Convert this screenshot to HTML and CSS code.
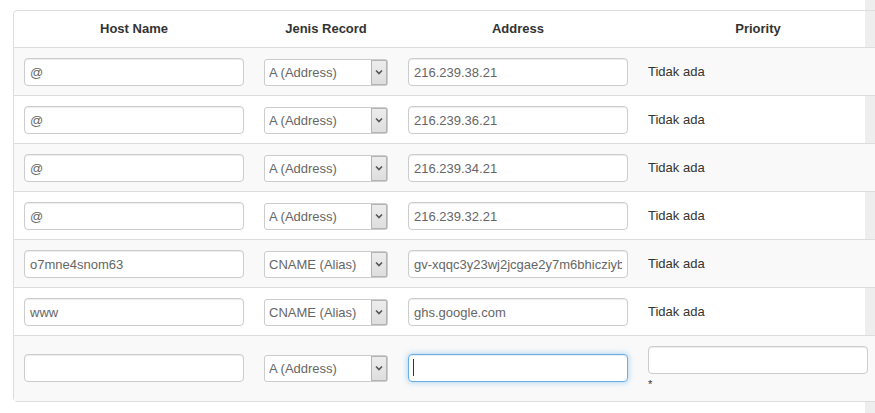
FILE: index.html
```html
<!DOCTYPE html>
<html lang="id">
<head>
    <meta charset="UTF-8">
    <meta name="viewport" content="width=device-width, initial-scale=1.0">
    <title>Data DNS</title>
    <link rel="stylesheet" href="styles.css">
</head>
<body>
    <div class="page">
        <div class="panel">
            <table class="dns-table">
                <colgroup>
                    <col class="col-host">
                    <col class="col-type">
                    <col class="col-addr">
                    <col class="col-prio">
                </colgroup>
                <thead>
                    <tr>
                        <th>Host Name</th>
                        <th>Jenis Record</th>
                        <th>Address</th>
                        <th>Priority</th>
                    </tr>
                </thead>
                <tbody>
                    <tr>
                        <td><input class="field" type="text" value="@"></td>
                        <td><div class="select-wrap"><select class="field-select"><option>A (Address)</option></select><span class="select-btn"><svg width="8" height="6" viewBox="0 0 8 6"><path d="M1 1.5 L4 4.5 L7 1.5" fill="none" stroke="#555" stroke-width="1.6"/></svg></span></div></td>
                        <td><input class="field" type="text" value="216.239.38.21"></td>
                        <td class="prio">Tidak ada</td>
                    </tr>
                    <tr>
                        <td><input class="field" type="text" value="@"></td>
                        <td><div class="select-wrap"><select class="field-select"><option>A (Address)</option></select><span class="select-btn"><svg width="8" height="6" viewBox="0 0 8 6"><path d="M1 1.5 L4 4.5 L7 1.5" fill="none" stroke="#555" stroke-width="1.6"/></svg></span></div></td>
                        <td><input class="field" type="text" value="216.239.36.21"></td>
                        <td class="prio">Tidak ada</td>
                    </tr>
                    <tr>
                        <td><input class="field" type="text" value="@"></td>
                        <td><div class="select-wrap"><select class="field-select"><option>A (Address)</option></select><span class="select-btn"><svg width="8" height="6" viewBox="0 0 8 6"><path d="M1 1.5 L4 4.5 L7 1.5" fill="none" stroke="#555" stroke-width="1.6"/></svg></span></div></td>
                        <td><input class="field" type="text" value="216.239.34.21"></td>
                        <td class="prio">Tidak ada</td>
                    </tr>
                    <tr>
                        <td><input class="field" type="text" value="@"></td>
                        <td><div class="select-wrap"><select class="field-select"><option>A (Address)</option></select><span class="select-btn"><svg width="8" height="6" viewBox="0 0 8 6"><path d="M1 1.5 L4 4.5 L7 1.5" fill="none" stroke="#555" stroke-width="1.6"/></svg></span></div></td>
                        <td><input class="field" type="text" value="216.239.32.21"></td>
                        <td class="prio">Tidak ada</td>
                    </tr>
                    <tr>
                        <td><input class="field" type="text" value="o7mne4snom63"></td>
                        <td><div class="select-wrap"><select class="field-select"><option>CNAME (Alias)</option></select><span class="select-btn"><svg width="8" height="6" viewBox="0 0 8 6"><path d="M1 1.5 L4 4.5 L7 1.5" fill="none" stroke="#555" stroke-width="1.6"/></svg></span></div></td>
                        <td><input class="field" type="text" value="gv-xqqc3y23wj2jcgae2y7m6bhicziybj3q.domainverify.googlehosted.com"></td>
                        <td class="prio">Tidak ada</td>
                    </tr>
                    <tr>
                        <td><input class="field" type="text" value="www"></td>
                        <td><div class="select-wrap"><select class="field-select"><option>CNAME (Alias)</option></select><span class="select-btn"><svg width="8" height="6" viewBox="0 0 8 6"><path d="M1 1.5 L4 4.5 L7 1.5" fill="none" stroke="#555" stroke-width="1.6"/></svg></span></div></td>
                        <td><input class="field" type="text" value="ghs.google.com"></td>
                        <td class="prio">Tidak ada</td>
                    </tr>
                    <tr class="new-row">
                        <td><input class="field" type="text" value=""></td>
                        <td><div class="select-wrap"><select class="field-select"><option>A (Address)</option></select><span class="select-btn"><svg width="8" height="6" viewBox="0 0 8 6"><path d="M1 1.5 L4 4.5 L7 1.5" fill="none" stroke="#555" stroke-width="1.6"/></svg></span></div></td>
                        <td><div class="caret-wrap"><input class="field focused" type="text" value=""><span class="caret"></span></div></td>
                        <td>
                            <input class="field" type="text" value="">
                            <div class="required">*</div>
                        </td>
                    </tr>
                </tbody>
            </table>
        </div>
    </div>
</body>
</html>
```

FILE: styles.css
```css
html, body {
    overflow: hidden;
}

body {
    margin: 0;
    font-family: "Liberation Sans", Arial, sans-serif;
    font-size: 13px;
    color: #333;
    background: linear-gradient(to right, #fff 865px, #eeeeee 865px);
    min-height: 413px;
}

.page {
    padding: 10px 0 0 13px;
}

.panel {
    width: 866px;
    border: 1px solid #ddd;
    border-radius: 4px;
}

.dns-table {
    border-collapse: collapse;
    table-layout: fixed;
    width: 864px;
}

.col-host { width: 240px; }
.col-type { width: 144px; }
.col-addr { width: 240px; }
.col-prio { width: 240px; }

.dns-table th {
    font-weight: bold;
    text-align: center;
    line-height: 16px;
    padding: 10px 10px;
    color: #333;
}

.dns-table td {
    border-top: 1px solid #ddd;
    padding: 10px 10px 9px;
    vertical-align: middle;
    line-height: 16px;
}

.dns-table tbody tr:nth-child(odd) td {
    background: #f9f9f9;
}

.dns-table tr.new-row td {
    padding: 10px 10px 11px;
}

.field {
    display: block;
    box-sizing: border-box;
    width: 220px;
    height: 28px;
    margin: 0;
    padding: 0 5px;
    font-family: "Liberation Sans", Arial, sans-serif;
    font-size: 13px;
    color: #666;
    background: #fff;
    border: 1px solid #ccc;
    border-radius: 4px;
    box-shadow: inset 0 1px 1px rgba(0,0,0,0.075);
    outline: none;
}

.field.focused {
    border-color: #66afe9;
    box-shadow: inset 0 1px 1px rgba(0,0,0,0.075), 0 0 6px rgba(102,175,233,0.6);
}

.caret-wrap {
    position: relative;
}

.caret {
    position: absolute;
    left: 5px;
    top: 5px;
    width: 1px;
    height: 17px;
    background: #333;
}

.select-wrap {
    position: relative;
    width: 124px;
}

.field-select {
    display: block;
    box-sizing: border-box;
    width: 124px;
    height: 27px;
    margin: 0;
    padding: 0 4px;
    font-family: "Liberation Sans", Arial, sans-serif;
    font-size: 13px;
    color: #666;
    background: #fff;
    border: 1px solid #ccc;
    border-radius: 3px;
    -webkit-appearance: none;
    appearance: none;
    outline: none;
}

.select-btn {
    position: absolute;
    right: 1px;
    top: 1px;
    bottom: 1px;
    width: 16px;
    box-sizing: border-box;
    border: 1px solid #b4b4b4;
    background: linear-gradient(#ececec, #dedede);
    display: flex;
    align-items: center;
    justify-content: center;
}

.prio {
    color: #333;
}

.required {
    height: 16px;
    line-height: 20px;
    font-size: 11px;
    color: #333;
}
```
